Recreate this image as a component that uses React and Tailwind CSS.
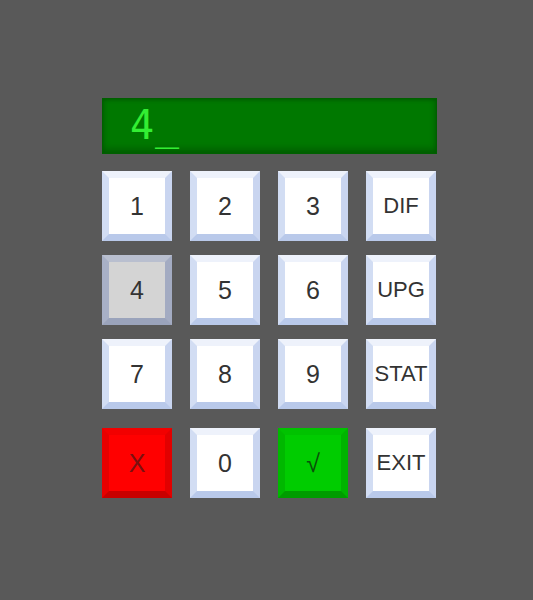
import React from "react";

const font = { fontFamily: '"Liberation Sans", Arial, sans-serif' };

function Key({ label, variant = "white", small = false }) {
  const base =
    "w-[70px] h-[70px] border-[7px] flex items-center justify-center box-border";
  let cls = "";
  if (variant === "white") {
    cls =
      "bg-white border-t-[#eef2fb] border-l-[#d2ddf3] border-r-[#c9d5f0] border-b-[#b9c9ea] text-[#333333]";
  } else if (variant === "pressed") {
    cls =
      "bg-[#d4d4d4] border-t-[#b9bfcf] border-l-[#a8b0c6] border-r-[#a3abc2] border-b-[#9aa3bb] text-[#333333]";
  } else if (variant === "red") {
    cls =
      "bg-[#ff0000] border-t-[#f20000] border-l-[#e80000] border-r-[#e20000] border-b-[#c80000] text-[#7a1010]";
  } else if (variant === "green") {
    cls =
      "bg-[#00cc00] border-t-[#00c200] border-l-[#00b800] border-r-[#00b400] border-b-[#009c00] text-[#0a4f0a]";
  }
  return (
    <div className={`${base} ${cls}`}>
      <span
        className={small ? "text-[22px] leading-none" : "text-[25px] leading-none"}
        style={font}
      >
        {label}
      </span>
    </div>
  );
}

export default function App() {
  return (
    <div className="w-[533px] h-[600px] bg-[#595959] overflow-hidden">
      <div className="pt-[98px] pl-[102px] flex flex-col">
        <div className="w-[335px] h-[56px] bg-[#007800] border border-[#006000] shadow-[inset_0_-4px_6px_rgba(0,60,0,0.45),inset_0_2px_3px_rgba(0,60,0,0.3)] flex items-center pl-[27px]">
          <span
            className="text-[40px] leading-none text-[#33ee33] tracking-[1px] -mt-[2px]"
            style={{ fontFamily: '"DejaVu Sans Mono", monospace' }}
          >
            4_
          </span>
        </div>
        <div className="mt-[17px] flex flex-col gap-[14px]">
          <div className="flex gap-[18px]">
            <Key label="1" />
            <Key label="2" />
            <Key label="3" />
            <Key label="DIF" small />
          </div>
          <div className="flex gap-[18px]">
            <Key label="4" variant="pressed" />
            <Key label="5" />
            <Key label="6" />
            <Key label="UPG" small />
          </div>
          <div className="flex gap-[18px]">
            <Key label="7" />
            <Key label="8" />
            <Key label="9" />
            <Key label="STAT" small />
          </div>
          <div className="flex gap-[18px] mt-[5px]">
            <Key label="X" variant="red" />
            <Key label="0" />
            <Key label="√" variant="green" />
            <Key label="EXIT" small />
          </div>
        </div>
      </div>
    </div>
  );
}
